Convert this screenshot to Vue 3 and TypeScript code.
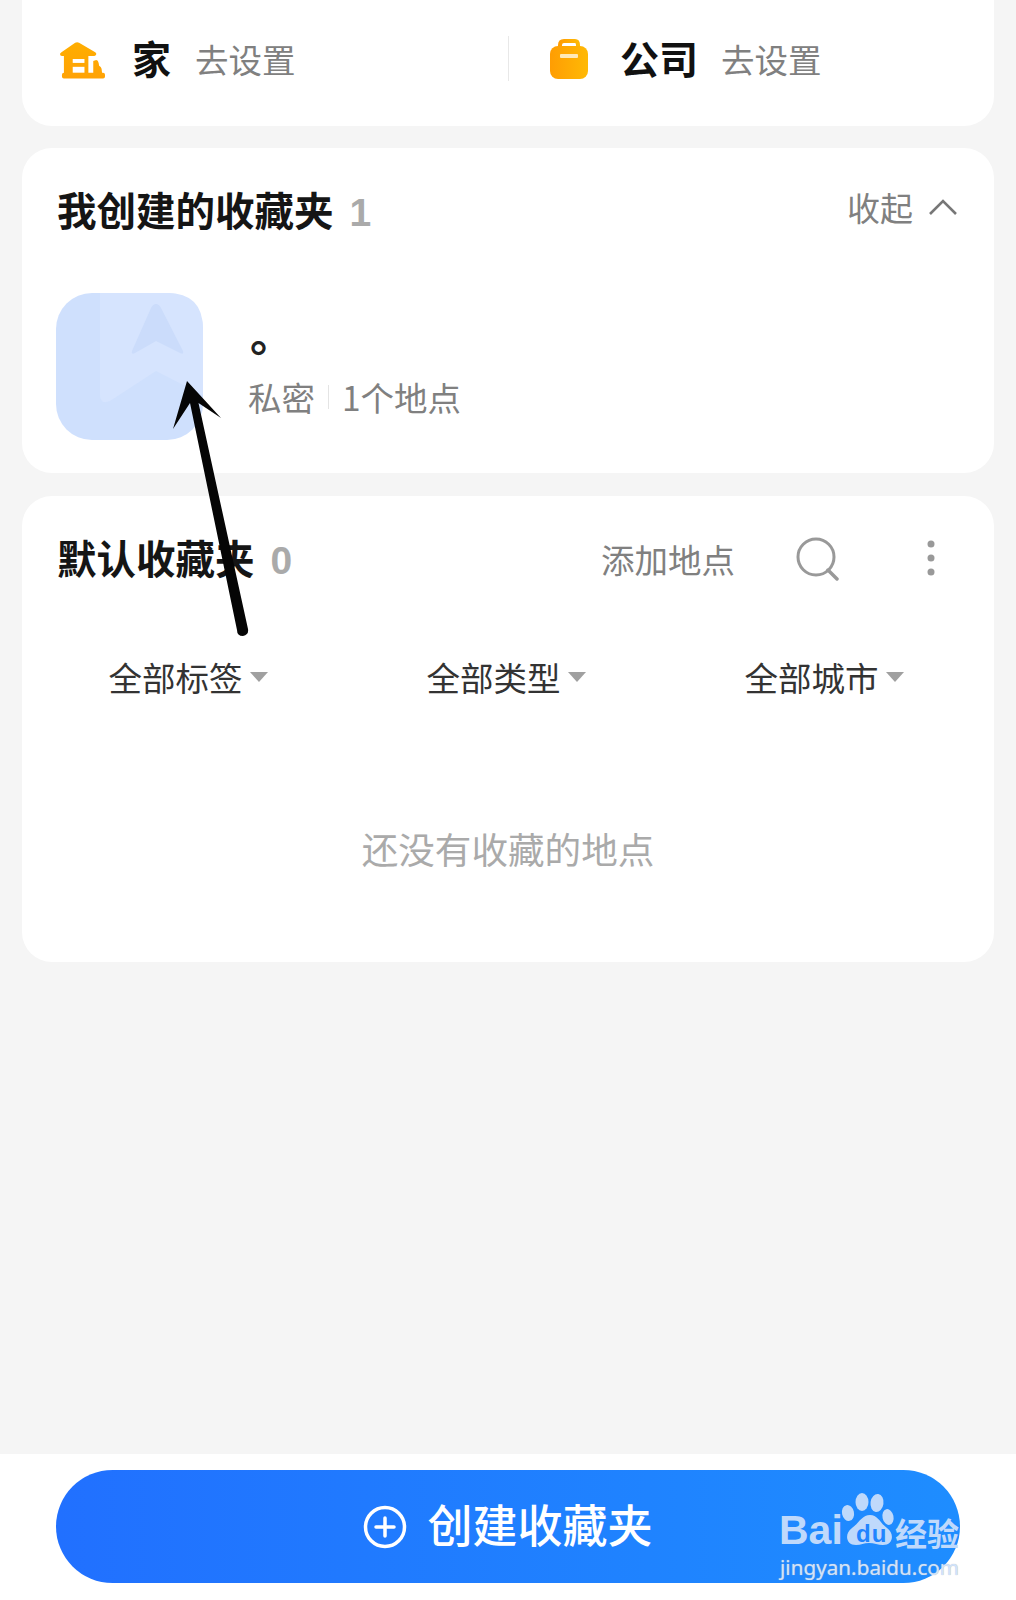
<script setup lang="ts">
const filters: string[] = ['全部标签', '全部类型', '全部城市']
</script>

<template>
  <div class="page">
    <section class="card shortcuts">
      <div class="shortcut home">
        <svg class="place-icon" width="45" height="40" viewBox="0 0 46 40">
          <defs>
            <linearGradient id="houseFill" x1="0" y1="0" x2="0" y2="1">
              <stop offset="0" stop-color="#ffae00" />
              <stop offset="1" stop-color="#ffa205" />
            </linearGradient>
          </defs>
          <path fill="url(#houseFill)" d="M0 15Q0 14 1.500 13L15.500 3.500Q17.500 2 19.500 3.500L36 13Q37.500 14 37 15.500Q36.500 17 35 17H29V34H34V22L37 21Q39 21 39.500 24L40 27Q42 28 42.500 30L43 34H44Q46 34 46 36V38Q46 40 44 40H4Q2 40 2 38V36Q2 34 4 34V17H2Q0 17 0 15Z" />
          <rect x="13" y="20" width="12" height="4" fill="#fff" />
          <rect x="13" y="28" width="12" height="6" fill="#fff" />
        </svg>
        <span class="place-name">家</span>
        <span class="place-action">去设置</span>
      </div>
      <div class="shortcut work">
        <svg class="place-icon" width="38" height="40" viewBox="0 0 38 40">
          <defs>
            <linearGradient id="bagFill" x1="0" y1="0" x2="1" y2="0">
              <stop offset="0" stop-color="#ff9d03" />
              <stop offset="1" stop-color="#ffb905" />
            </linearGradient>
          </defs>
          <path fill="none" stroke="url(#bagFill)" stroke-width="4" d="M10 9V6Q10 2 14 2H25Q28 2 28 6V9" />
          <rect y="7" width="38" height="33" rx="8" fill="url(#bagFill)" />
          <rect x="10" y="15" width="18" height="4" rx="1" fill="#ffe9b8" />
        </svg>
        <span class="place-name">公司</span>
        <span class="place-action">去设置</span>
      </div>
    </section>

    <section class="card created">
      <header class="section-head">
        <h2 class="section-title">我创建的收藏夹<span class="count">1</span></h2>
        <div class="collapse">
          <span>收起</span>
          <svg width="30" height="18" viewBox="0 0 30 18">
            <path d="M2 16L15 3L28 16" fill="none" stroke="#777" stroke-width="2.600" />
          </svg>
        </div>
      </header>
      <div class="folder">
        <svg class="thumb" width="147" height="147" viewBox="0 0 147 147">
          <rect width="147" height="147" rx="36" fill="#cfe0fd" />
          <path d="M44 0H111Q147 0 147 36V102L100 78L54 108Q44 112 44 102Z" fill="#d6e4fe" />
          <path d="M100 11Q103 11 105 15L127 58Q128 62 124 60L100 48L79 60Q75 62 76 58L95 15Q97 11 100 11Z" fill="#cbdcfb" />
        </svg>
        <div class="folder-info">
          <div class="folder-name">。</div>
          <div class="folder-meta">
            <span>私密</span>
            <i class="meta-sep"></i>
            <span>1个地点</span>
          </div>
        </div>
      </div>
    </section>

    <section class="card defaults">
      <header class="section-head">
        <h2 class="section-title">默认收藏夹<span class="count">0</span></h2>
        <div class="tools">
          <span class="add">添加地点</span>
          <svg class="search" width="44" height="44" viewBox="0 0 44 44">
            <circle cx="20" cy="20" r="18" fill="none" stroke="#999" stroke-width="3" />
            <path d="M32 33L41 42" fill="none" stroke="#999" stroke-width="3.500" stroke-linecap="round" />
          </svg>
          <svg class="more" width="8" height="36" viewBox="0 0 8 36">
            <circle cx="4" cy="4" r="3.500" fill="#999" />
            <circle cx="4" cy="18" r="3.500" fill="#999" />
            <circle cx="4" cy="32" r="3.500" fill="#999" />
          </svg>
        </div>
      </header>
      <div class="filters">
        <div v-for="f in filters" :key="f" class="filter">
          <span>{{ f }}</span>
          <i class="caret"></i>
        </div>
      </div>
      <p class="empty">还没有收藏的地点</p>
    </section>

    <div class="spacer"></div>

    <footer class="bottom">
      <button class="create" type="button">
        <svg width="44" height="44" viewBox="0 0 44 44">
          <circle cx="22" cy="22" r="19.500" fill="none" stroke="#fff" stroke-width="3.500" />
          <path d="M22 13V31M13 22H31" fill="none" stroke="#fff" stroke-width="3.500" stroke-linecap="round" />
        </svg>
        <span class="create-label">创建收藏夹</span>
      </button>
    </footer>

    <svg class="arrow" width="1016" height="700" viewBox="0 0 1016 700">
      <path d="M187 381L221 418L198.500 403L248 629Q249 635 243 636Q237 636 237 630L190 403L173 429Z" fill="#050505" />
    </svg>

    <div class="watermark">
      <svg class="paw" width="64" height="66" viewBox="0 0 64 66">
        <ellipse cx="24" cy="10" rx="6.500" ry="9" fill="#bfd9fb" />
        <ellipse cx="39" cy="11" rx="6.500" ry="9" fill="#bfd9fb" transform="rotate(8 39 11)" />
        <ellipse cx="10" cy="21" rx="6" ry="8" fill="#bfd9fb" transform="rotate(-12 10 21)" />
        <ellipse cx="50" cy="25" rx="5.500" ry="8" fill="#bfd9fb" transform="rotate(-12 50 25)" />
        <path d="M32 23C40 23 42 31 49 36C57 42 55 53 45 53C40 53 36 51 31 51C26 51 23 53 18 53C8 53 6 42 14 36C21 31 24 23 32 23Z" fill="#bfd9fb" />
      </svg>
      <span class="wm-du">du</span>
      <span class="wm-bai">Bai</span>
      <span class="wm-cn">经验</span>
      <span class="wm-url">jingyan.baidu.com</span>
    </div>
  </div>
</template>

<style scoped>
.page {
  position: relative;
  width: 1016px;
  height: 1600px;
  overflow: hidden;
  display: flex;
  flex-direction: column;
  background: #f5f5f5;
  font-family: "Noto Sans CJK SC", "Noto Sans", sans-serif;
}
.card {
  margin: 0 22px;
  background: #fff;
  border-radius: 30px;
}
.shortcuts {
  height: 126px;
  flex: none;
  border-radius: 0 0 30px 30px;
  display: flex;
  box-sizing: border-box;
  padding-top: 36px;
  position: relative;
}
.shortcuts::after {
  content: "";
  position: absolute;
  left: 486px;
  top: 36px;
  width: 1px;
  height: 45px;
  background: #e8e8e8;
}
.shortcut {
  display: flex;
  align-items: center;
  height: 42px;
}
.home {
  width: 528px;
  padding-left: 38px;
  box-sizing: border-box;
}
.home .place-name {
  margin-left: 27px;
}
.home .place-action {
  margin-left: 24px;
}
.work .place-name {
  margin-left: 32px;
}
.work .place-action {
  margin-left: 23px;
}
.place-icon {
  flex: none;
  margin-top: 4px;
}
.place-name {
  font-size: 39px;
  line-height: 42px;
  font-weight: 700;
  color: #111;
}
.place-action {
  margin-top: 3px;
  font-size: 33.500px;
  line-height: 42px;
  color: #808080;
}
.created {
  margin-top: 22px;
  height: 325px;
  flex: none;
}
.defaults {
  margin-top: 23px;
  height: 466px;
  flex: none;
}
.section-head {
  display: flex;
  align-items: center;
  justify-content: space-between;
  height: 50px;
  padding: 38px 36px 0 35px;
}
.section-title {
  margin: 0;
  font-size: 39.500px;
  line-height: 50px;
  font-weight: 700;
  color: #151515;
}
.count {
  margin-left: 16px;
  color: #aaa;
  font-family: "Liberation Sans", sans-serif;
  font-size: 39px;
}
.collapse {
  display: flex;
  align-items: center;
  gap: 15px;
  margin-top: -8px;
  font-size: 33px;
  color: #808080;
}
.folder {
  display: flex;
  align-items: center;
  margin-top: 57px;
  padding-left: 34px;
}
.thumb {
  flex: none;
}
.folder-info {
  margin: 0 0 4px 45px;
}
.folder-name {
  font-size: 44px;
  font-weight: 700;
  line-height: 50px;
  height: 50px;
  padding-left: 2px;
  color: #222;
}
.folder-meta {
  display: flex;
  align-items: center;
  margin-top: 14px;
  font-size: 33.500px;
  line-height: 50px;
  color: #808080;
}
.meta-sep {
  width: 1px;
  height: 24px;
  margin: 0 13px;
  background: #e4e4e4;
}
.tools {
  display: flex;
  align-items: center;
  margin-top: -2px;
  color: #808080;
  font-size: 33.500px;
}
.search {
  margin-left: 61px;
  margin-top: 2px;
}
.more {
  margin-left: 87px;
  margin-right: 23px;
}
.filters {
  display: grid;
  grid-template-columns: repeat(3, 318px);
  margin: 71px 0 0 7px;
}
.filter {
  display: flex;
  align-items: center;
  justify-content: center;
  font-size: 33.500px;
  line-height: 44px;
  color: #333;
}
.caret {
  width: 0;
  height: 0;
  margin-left: 7px;
  border-left: 9px solid transparent;
  border-right: 9px solid transparent;
  border-top: 10px solid #a0a0a0;
}
.empty {
  margin: 125px 0 0;
  text-align: center;
  font-size: 36.600px;
  line-height: 50px;
  color: #aaa;
}
.spacer {
  flex: 1;
}
.bottom {
  flex: none;
  height: 146px;
  box-sizing: border-box;
  background: #fff;
  padding: 16px 56px 0;
}
.create {
  display: flex;
  align-items: center;
  justify-content: center;
  gap: 20px;
  width: 904px;
  height: 113px;
  padding: 0;
  border: 0;
  border-radius: 57px;
  background: linear-gradient(90deg, #2170ff, #1e8dff);
  color: #fff;
  font-family: inherit;
  font-size: 45px;
}
.create-label {
  padding-bottom: 6px;
  font-weight: 500;
}
.arrow {
  position: absolute;
  left: 0;
  top: 0;
  pointer-events: none;
}
.watermark {
  position: absolute;
  left: 770px;
  top: 1490px;
  width: 200px;
  height: 100px;
  pointer-events: none;
}
.paw {
  position: absolute;
  left: 68px;
  top: 2px;
}
.wm-du {
  position: absolute;
  left: 86px;
  top: 32px;
  font-family: "Liberation Sans", sans-serif;
  font-weight: 700;
  font-size: 24px;
  line-height: 24px;
  letter-spacing: 1px;
  color: #2184ff;
}
.wm-bai {
  position: absolute;
  left: 9px;
  top: 18px;
  font-family: "Liberation Sans", sans-serif;
  font-weight: 700;
  font-size: 41px;
  line-height: 44px;
  color: #bfd9fb;
}
.wm-cn {
  position: absolute;
  left: 125px;
  top: 22px;
  font-size: 32px;
  line-height: 40px;
  font-weight: 700;
  color: #bfd9fb;
}
.wm-url {
  position: absolute;
  left: 10px;
  top: 62px;
  font-family: "Noto Sans", sans-serif;
  font-size: 20.700px;
  line-height: 30px;
  white-space: nowrap;
  color: #d0e3fc;
  text-shadow: 0 0 1px #b8b8b8;
}
</style>
